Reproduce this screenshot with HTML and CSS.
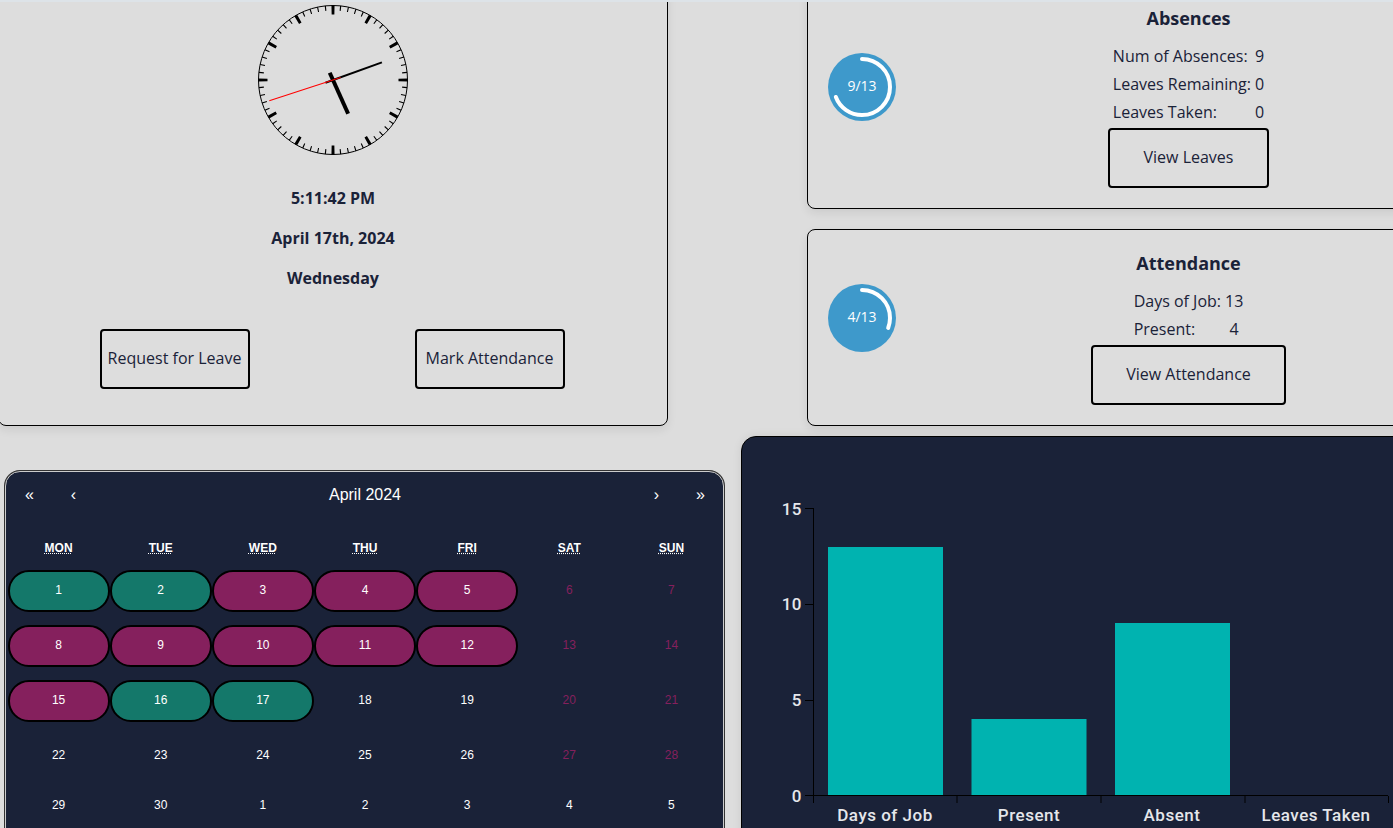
FILE: index.html
```html
<!DOCTYPE html>
<html lang="en">
	<head>
		<meta charset="UTF-8">
		<title>Employee Dashboard</title>
		<link rel="stylesheet" href="styles.css">
	</head>
	<body>
		<div class="topline"></div>
		<div class="dashboard">
			<div class="row-top">
				<div class="card clock-card">
					<svg class="clock" width="150" height="150" viewBox="0 0 150 150">
						<circle class="clock-face" cx="75" cy="75" r="74.5"/>
						<circle class="marks-min" cx="75" cy="75" r="72" pathLength="360"/>
						<circle class="marks-hour" cx="75" cy="75" r="70" pathLength="360"/>
						<line class="hand-hour" x1="75" y1="83" x2="75" y2="38" transform="rotate(155.85 75 75)"/>
						<line class="hand-min" x1="75" y1="83" x2="75" y2="23" transform="rotate(70.2 75 75)"/>
						<line class="hand-sec" x1="75" y1="83" x2="75" y2="8" transform="rotate(252 75 75)"/>
					</svg>
					<p class="clock-text">5:11:42 PM</p>
					<p class="clock-text">April 17th, 2024</p>
					<p class="clock-text">Wednesday</p>
					<div class="clock-btns">
						<button class="btn btn-leave">Request for Leave</button>
						<button class="btn btn-leave">Mark Attendance</button>
					</div>
				</div>
				<div class="stats">
					<div class="card stat-card">
						<svg class="ring" width="68" height="68" viewBox="0 0 68 68">
							<circle class="ring-bg" cx="34" cy="34" r="34"/>
							<circle class="ring-bar" cx="34" cy="34" r="28" pathLength="100" stroke-dasharray="69.2 100" transform="rotate(-90 34 34)"/>
							<text class="ring-text" x="34" y="38">9/13</text>
						</svg>
						<div class="stat-body">
							<h4>Absences</h4>
							<table class="stat-table">
								<tr><td>Num of Absences:</td><td>9</td></tr>
								<tr><td>Leaves Remaining:</td><td>0</td></tr>
								<tr><td>Leaves Taken:</td><td>0</td></tr>
							</table>
							<button class="btn btn-leaves">View Leaves</button>
						</div>
					</div>
					<div class="card stat-card">
						<svg class="ring" width="68" height="68" viewBox="0 0 68 68">
							<circle class="ring-bg" cx="34" cy="34" r="34"/>
							<circle class="ring-bar" cx="34" cy="34" r="28" pathLength="100" stroke-dasharray="30.8 100" transform="rotate(-90 34 34)"/>
							<text class="ring-text" x="34" y="38">4/13</text>
						</svg>
						<div class="stat-body">
							<h4>Attendance</h4>
							<table class="stat-table">
								<tr><td>Days of Job:</td><td>13</td></tr>
								<tr><td>Present:</td><td>4</td></tr>
							</table>
							<button class="btn btn-attend">View Attendance</button>
						</div>
					</div>
				</div>
			</div>
			<div class="row-bottom">
				<div class="calendar">
					<div class="cal-nav">
						<button>«</button>
						<button>‹</button>
						<span class="cal-label">April 2024</span>
						<button>›</button>
						<button>»</button>
					</div>
					<div class="cal-week">
						<abbr>MON</abbr><abbr>TUE</abbr><abbr>WED</abbr><abbr>THU</abbr><abbr>FRI</abbr><abbr>SAT</abbr><abbr>SUN</abbr>
					</div>
					<div class="cal-days">
						<span class="day green">1</span><span class="day green">2</span><span class="day red">3</span><span class="day red">4</span><span class="day red">5</span><span class="day off">6</span><span class="day off">7</span>
						<span class="day red">8</span><span class="day red">9</span><span class="day red">10</span><span class="day red">11</span><span class="day red">12</span><span class="day off">13</span><span class="day off">14</span>
						<span class="day red">15</span><span class="day green">16</span><span class="day green">17</span><span class="day">18</span><span class="day">19</span><span class="day off">20</span><span class="day off">21</span>
						<span class="day">22</span><span class="day">23</span><span class="day">24</span><span class="day">25</span><span class="day">26</span><span class="day off">27</span><span class="day off">28</span>
						<span class="day">29</span><span class="day">30</span><span class="day">1</span><span class="day">2</span><span class="day">3</span><span class="day">4</span><span class="day">5</span>
					</div>
				</div>
				<div class="chart-card">
					<svg class="chart" width="660" height="400" viewBox="0 0 660 400">
						<rect class="bar" x="86" y="110" width="115" height="248.5"/>
						<rect class="bar" x="229.5" y="282" width="115" height="76.5"/>
						<rect class="bar" x="373" y="186" width="115" height="172.5"/>
						<path class="axis" d="M71.5 71V359M63 71.5H71.5M63 167.5H71.5M63 263.5H71.5M63 358.5H646M71.5 359V366M215 359V366M359 359V366M503 359V366M646.5 359V366"/>
						<text class="tick-y" x="60" y="78">15</text>
						<text class="tick-y" x="60" y="173">10</text>
						<text class="tick-y" x="60" y="269">5</text>
						<text class="tick-y" x="60" y="365">0</text>
						<text class="tick-x" x="143" y="384">Days of Job</text>
						<text class="tick-x" x="287" y="384">Present</text>
						<text class="tick-x" x="430" y="384">Absent</text>
						<text class="tick-x" x="574" y="384">Leaves Taken</text>
					</svg>
				</div>
			</div>
		</div>
	</body>
</html>
```

FILE: styles.css
```css
* {
	box-sizing: border-box;
}

html, body {
	margin: 0;
	padding: 0;
	height: 828px;
	overflow: hidden;
	background: #dddddd;
	color: #1a2238;
	font-family: "Open Sans", "Liberation Sans", sans-serif;
	font-size: 16px;
}

.topline {
	height: 2px;
	background: #dde3e8;
	position: relative;
	z-index: 2;
}

.dashboard {
	width: 1500px;
	margin: -18px 0 0 -2px;
}

.row-top {
	display: flex;
	align-items: stretch;
}

/* cards */
.card {
	background: #dddddd;
	border: 1px solid #000;
	border-radius: 8px;
	box-shadow: 0 4px 10px rgba(0, 0, 0, 0.08);
}

.clock-card {
	width: 670px;
	padding-top: 20px;
	display: flex;
	flex-direction: column;
	align-items: center;
}

.clock {
	display: block;
}

.clock-face {
	fill: none;
	stroke: #000;
	stroke-width: 1;
}

.marks-min {
	fill: none;
	stroke: #000;
	stroke-width: 5;
	stroke-dasharray: 0.9 5.1;
	stroke-dashoffset: 0.45;
}

.marks-hour {
	fill: none;
	stroke: #000;
	stroke-width: 9;
	stroke-dasharray: 2.45 27.55;
	stroke-dashoffset: 1.225;
}

.hand-hour {
	stroke: #000;
	stroke-width: 4;
}

.hand-min {
	stroke: #000;
	stroke-width: 2;
}

.hand-sec {
	stroke: #f00;
	stroke-width: 1;
}

.clock-text {
	margin: 0 0 20px;
	height: 20px;
	line-height: 20px;
	font-weight: 700;
}

.clock-text:first-of-type {
	margin-top: 33px;
}

.clock-btns {
	display: flex;
	gap: 165px;
	margin: 21px 2px 0 0;
}

.btn {
	height: 60px;
	padding: 0 0 2px;
	background: transparent;
	border: 2px solid #000;
	border-radius: 4px;
	color: #1a2238;
	font-family: inherit;
	font-size: 16px;
}

.btn-leave {
	width: 150px;
}

.btn-leaves {
	width: 161px;
}

.btn-attend {
	width: 195px;
}

/* stat cards */
.stats {
	margin-left: 139px;
	display: flex;
	flex-direction: column;
	gap: 20px;
}

.stat-card {
	width: 675px;
	padding: 20px 0 20px 20px;
	display: flex;
	align-items: center;
}

.ring {
	flex: none;
	margin-bottom: 20px;
}

.ring-bg {
	fill: #3e99cb;
}

.ring-bar {
	fill: none;
	stroke: #fff;
	stroke-width: 4;
	stroke-linecap: round;
}

.ring-text {
	fill: #fff;
	font-size: 14px;
	font-weight: 500;
	text-anchor: middle;
}

.stat-body {
	flex: 1;
	display: flex;
	flex-direction: column;
	align-items: center;
}

.stat-body h4 {
	margin: -1px 0 10px;
	height: 28px;
	line-height: 28px;
	font-size: 18px;
	font-weight: 700;
}

.stat-table {
	border-collapse: collapse;
	margin-bottom: 2px;
}

.stat-table td {
	padding: 0;
	height: 28px;
	line-height: 28px;
}

.stat-table td:last-child {
	padding-left: 4px;
	text-align: center;
}

/* calendar */
.row-bottom {
	display: flex;
	align-items: flex-start;
	margin-top: 10px;
}

.calendar {
	flex: none;
	width: 719px;
	height: 400px;
	margin: 35px 0 0 7px;
	padding: 1px 0.5px 1px 1.5px;
	background: #1a2238;
	border: 1px solid #ccc;
	box-shadow: 0 0 0 1px #333;
	border-radius: 15px;
	color: #fff;
	font-family: "Liberation Sans", Arial, sans-serif;
	font-size: 12px;
}

.cal-nav {
	display: flex;
	height: 44px;
	align-items: center;
}

.cal-nav button {
	width: 44px;
	height: 44px;
	padding: 0;
	background: none;
	border: 0;
	color: #fff;
	font-family: inherit;
	font-size: 16px;
}

.cal-label {
	flex: 1;
	text-align: center;
	font-size: 16px;
}

.cal-week {
	display: grid;
	grid-template-columns: repeat(7, 1fr);
	margin-top: 21px;
	height: 20px;
	line-height: 20px;
	text-align: center;
	font-weight: 700;
}

.cal-week abbr {
	text-decoration: underline dotted;
}

.cal-days {
	display: grid;
	grid-template-columns: repeat(7, 1fr);
	grid-template-rows: 55px 55px 55px 50px 50px;
	margin-top: 12px;
	align-items: start;
}

.day {
	height: 42px;
	line-height: 37px;
	text-align: center;
	border: 2px solid transparent;
	border-radius: 21px;
}

.green {
	background: #14786a;
	border-color: #000;
}

.red {
	background: #85205d;
	border-color: #000;
}

.off {
	color: #85205d;
}

/* chart */
.chart-card {
	flex: none;
	width: 700px;
	height: 420px;
	margin-left: 17px;
	background: #1a2238;
	border: 1px solid #000;
	border-radius: 15px;
	box-shadow: 0 0 10px rgba(0, 0, 0, 0.08);
}

.chart {
	display: block;
}

.bar {
	fill: #00b3b0;
}

.axis {
	fill: none;
	stroke: #000;
	stroke-width: 1;
}

.tick-y, .tick-x {
	fill: #e5e7eb;
	font-family: Roboto, "Liberation Sans", sans-serif;
	font-size: 17px;
	font-weight: 500;
	letter-spacing: 0.5px;
}

.tick-y {
	text-anchor: end;
}

.tick-x {
	text-anchor: middle;
}
```
